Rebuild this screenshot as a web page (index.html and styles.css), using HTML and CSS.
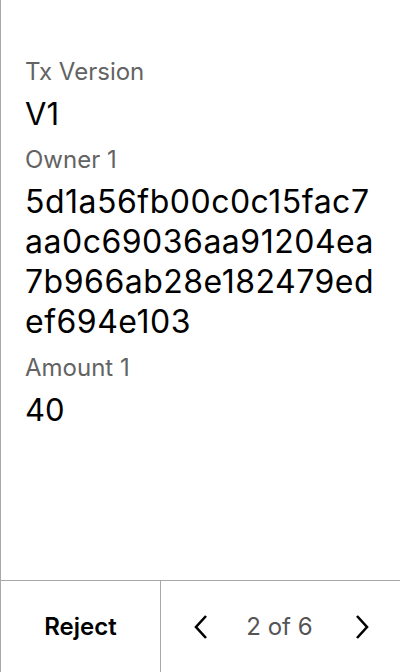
FILE: index.html
```html
<!DOCTYPE html>
<html>
<head>
<meta charset="utf-8">
<link rel="stylesheet" href="styles.css">
</head>
<body>
<div class="screen">
  <main class="content">
    <div class="field">
      <div class="label">Tx Version</div>
      <div class="value">V1</div>
    </div>
    <div class="field">
      <div class="label">Owner 1</div>
      <div class="value hex">5d1a56fb00c0c15fac7aa0c69036aa91204ea7b966ab28e182479edef694e103</div>
    </div>
    <div class="field">
      <div class="label">Amount 1</div>
      <div class="value">40</div>
    </div>
  </main>
  <footer class="footer">
    <button class="reject">Reject</button>
    <div class="pager">
      <svg class="chev" width="20" height="28" viewBox="0 0 20 28"><path d="M15 3 L5 14 L15 25" fill="none" stroke="#000" stroke-width="2.6"/></svg>
      <span class="count">2 of 6</span>
      <svg class="chev" width="20" height="28" viewBox="0 0 20 28"><path d="M5 3 L15 14 L5 25" fill="none" stroke="#000" stroke-width="2.6"/></svg>
    </div>
  </footer>
</div>
</body>
</html>
```
FILE: styles.css
```css
* { box-sizing: border-box; }
html, body { margin: 0; padding: 0; background: #fff; }
body { font-family: Inter, "Noto Sans", sans-serif; color: #000; }
.screen {
  width: 400px;
  height: 672px;
  border-left: 1px solid #a8a8a8;
  display: flex;
  flex-direction: column;
}
.content {
  flex: 1;
  padding: 58px 24px 0 24px;
  display: flex;
  flex-direction: column;
  gap: 12px;
}
.field {
  display: flex;
  flex-direction: column;
  gap: 8px;
}
.label {
  font-size: 24px;
  line-height: 28px;
  color: #636363;
}
.value {
  font-size: 31px;
  line-height: 40px;
  word-break: break-all;
}
.hex {
  font-size: 32px;
  letter-spacing: 0.5px;
}
.footer {
  height: 92px;
  border-top: 1px solid #a8a8a8;
  display: flex;
}
.reject {
  width: 160px;
  border: none;
  border-right: 1px solid #a8a8a8;
  background: #fff;
  font-family: inherit;
  font-size: 24px;
  font-weight: 600;
  color: #000;
  padding: 0;
}
.pager {
  flex: 1;
  display: flex;
  align-items: center;
  justify-content: space-between;
  padding: 0 28px 0 30px;
}
.count {
  font-size: 24px;
  color: #555;
  margin-right: 4px;
}
```
